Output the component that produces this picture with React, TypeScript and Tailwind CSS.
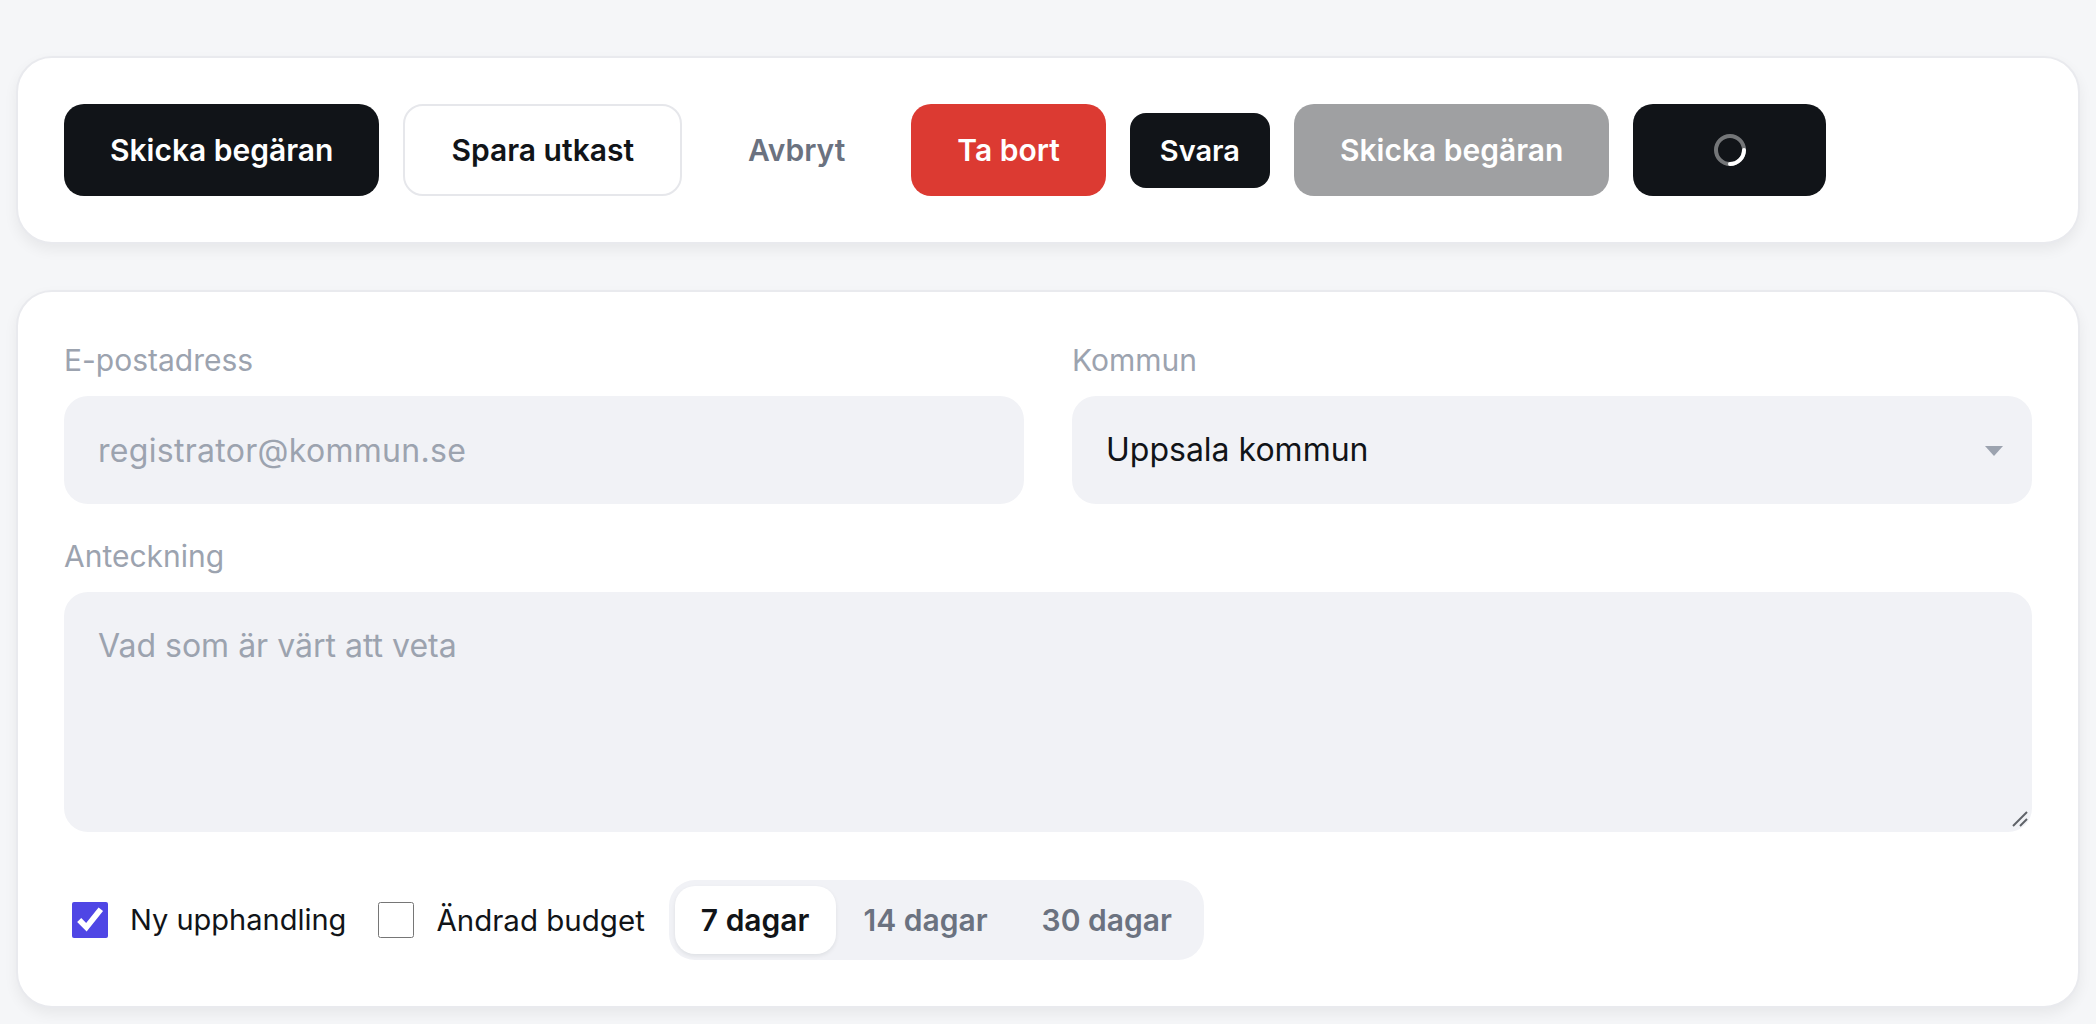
import { useState } from 'react';

const btnBase =
  'h-[92px] px-[46px] rounded-[20px] text-[30px] font-semibold leading-none flex items-center justify-center whitespace-nowrap';

const Spinner = () => (
  <svg width="34" height="34" viewBox="0 0 34 34" fill="none">
    <circle cx="17" cy="17" r="14" stroke="rgba(255,255,255,0.42)" strokeWidth="4" />
    <path d="M31 17 A14 14 0 0 1 17 31" stroke="#ffffff" strokeWidth="4" strokeLinecap="round" />
  </svg>
);

const ResizeHandle = () => (
  <svg width="18" height="18" viewBox="0 0 18 18" className="absolute right-[3px] bottom-[4px] pointer-events-none">
    <path d="M2 16 L16 2" stroke="#5f6368" strokeWidth="2" />
    <path d="M9 16 L16 9" stroke="#5f6368" strokeWidth="2" />
  </svg>
);

const App = () => {
  const [email, setEmail] = useState('');
  const [kommun, setKommun] = useState('uppsala');
  const [note, setNote] = useState('');
  const [nyUpphandling, setNyUpphandling] = useState(true);
  const [andradBudget, setAndradBudget] = useState(false);
  const [period, setPeriod] = useState('7');

  const periods = [
    { value: '7', label: '7 dagar' },
    { value: '14', label: '14 dagar' },
    { value: '30', label: '30 dagar' },
  ];

  return (
    <div className="min-h-screen bg-[#f5f6f8] px-[16px] pt-[56px] pb-[40px] font-['Inter','Noto_Sans',sans-serif] text-[#111418]">
      <div className="bg-white border-2 border-[#e9eaee] rounded-[36px] p-[46px] shadow-[0_6px_14px_rgba(17,20,24,0.06)]">
        <div className="flex items-center gap-[24px]">
          <button className={`${btnBase} bg-[#111418] text-white`}>Skicka begäran</button>
          <button className={`${btnBase} bg-white border-2 border-[#e6e7eb] text-[#111418]`}>Spara utkast</button>
          <button className="h-[92px] px-[42px] rounded-[20px] text-[30px] font-semibold leading-none flex items-center text-[#6b7280]">
            Avbryt
          </button>
          <button className={`${btnBase} bg-[#dc3a32] text-white`}>Ta bort</button>
          <button className="h-[75px] px-[30px] rounded-[16px] bg-[#111418] text-white text-[29px] font-semibold leading-none flex items-center">
            Svara
          </button>
          <button disabled className={`${btnBase} bg-[#111418] text-white opacity-40 cursor-not-allowed`}>
            Skicka begäran
          </button>
          <button className={`${btnBase} bg-[#111418] text-white w-[193px] px-0`} aria-busy="true">
            <Spinner />
          </button>
        </div>
      </div>

      <div className="mt-[46px] bg-white border-2 border-[#e9eaee] rounded-[36px] p-[46px] shadow-[0_6px_14px_rgba(17,20,24,0.06)]">
        <div className="grid grid-cols-2 gap-x-[48px]">
          <div className="flex flex-col">
            <label className="text-[30px] leading-[44px] text-[#9ca3af] mb-[14px]">E-postadress</label>
            <input
              type="email"
              value={email}
              onChange={(e) => setEmail(e.target.value)}
              placeholder="registrator@kommun.se"
              className="h-[108px] px-[34px] rounded-[24px] bg-[#f1f2f6] text-[32px] tracking-[0.3px] text-[#111418] placeholder:text-[#9ca3af] outline-none"
            />
          </div>
          <div className="flex flex-col">
            <label className="text-[30px] leading-[44px] text-[#9ca3af] mb-[14px]">Kommun</label>
            <div className="relative">
              <select
                value={kommun}
                onChange={(e) => setKommun(e.target.value)}
                className="w-full h-[108px] pl-[34px] pr-[80px] rounded-[24px] bg-[#f1f2f6] text-[32px] text-[#111418] outline-none appearance-none"
              >
                <option value="uppsala">Uppsala kommun</option>
                <option value="stockholm">Stockholms stad</option>
                <option value="goteborg">Göteborgs stad</option>
              </select>
              <svg width="18" height="10" viewBox="0 0 18 10" className="absolute right-[29px] top-[50px] pointer-events-none">
                <path d="M0 0 H18 L9 10 Z" fill="#9ca3af" />
              </svg>
            </div>
          </div>
        </div>

        <div className="flex flex-col mt-[30px]">
          <label className="text-[30px] leading-[44px] text-[#9ca3af] mb-[14px]">Anteckning</label>
          <div className="relative">
            <textarea
              value={note}
              onChange={(e) => setNote(e.target.value)}
              placeholder="Vad som är värt att veta"
              className="block w-full h-[240px] px-[34px] py-[30px] rounded-[24px] bg-[#f1f2f6] text-[32px] leading-[48px] text-[#111418] placeholder:text-[#9ca3af] outline-none resize-none"
            />
            <ResizeHandle />
          </div>
        </div>

        <div className="mt-[48px] flex items-center gap-[24px]">
          <label className="flex items-center gap-[16px] cursor-pointer">
            <input
              type="checkbox"
              checked={nyUpphandling}
              onChange={(e) => setNyUpphandling(e.target.checked)}
              className="w-[36px] h-[36px] ml-[8px] mr-[6px] accent-[#4f46e5]"
            />
            <span className="text-[29px] leading-[44px]">Ny upphandling</span>
          </label>
          <label className="flex items-center gap-[16px] cursor-pointer">
            <input
              type="checkbox"
              checked={andradBudget}
              onChange={(e) => setAndradBudget(e.target.checked)}
              className="w-[36px] h-[36px] ml-[8px] mr-[6px] accent-[#4f46e5]"
            />
            <span className="text-[29.5px] leading-[44px]">Ändrad budget</span>
          </label>
          <div className="flex items-center gap-[2px] p-[6px] rounded-[26px] bg-[#f1f2f6]">
            {periods.map((p) => (
              <button
                key={p.value}
                onClick={() => setPeriod(p.value)}
                className={
                  period === p.value
                    ? 'h-[68px] px-[26px] rounded-[20px] bg-white text-[30px] font-semibold text-[#111418] shadow-[0_2px_4px_rgba(17,20,24,0.08)]'
                    : 'h-[68px] px-[26px] rounded-[20px] text-[30px] font-semibold text-[#6b7280]'
                }
              >
                {p.label}
              </button>
            ))}
          </div>
        </div>
      </div>
    </div>
  );
};

export default App;
